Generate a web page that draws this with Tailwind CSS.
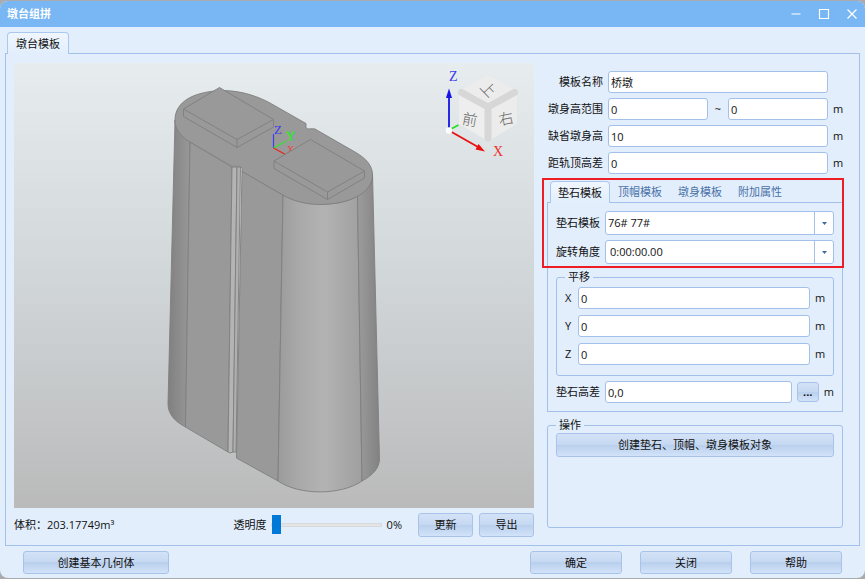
<!DOCTYPE html>
<html lang="zh-CN">
<head>
  <meta charset="UTF-8" />
  <meta name="viewport" content="width=device-width, initial-scale=1.0" />
  <title>墩台组拼</title>
  <script src="https://cdn.jsdelivr.net/npm/@tailwindcss/browser@4"></script>
</head>
<body class="bg-[#a9abae] h-screen py-px font-['Open_Sans','Noto_Sans_CJK_SC',sans-serif] text-[11px] leading-4 text-[#111]">
  <div class="h-full flex flex-col bg-[#e2eefc] rounded-lg overflow-hidden">

    <!-- title bar -->
    <header class="h-[26px] shrink-0 flex items-center bg-[#78b6f4] px-[7px] text-white">
      <h1 class="font-bold">墩台组拼</h1>
      <div class="ml-auto flex items-center gap-4">
        <button type="button" aria-label="最小化">
          <svg class="block size-3" viewBox="0 0 12 12" fill="none" stroke="#d6e9fd" stroke-width="1.4"><path d="M1.5 6h9" /></svg>
        </button>
        <button type="button" aria-label="最大化">
          <svg class="block size-3" viewBox="0 0 12 12" fill="none" stroke="#fff" stroke-width="1.2"><path d="M1.5 1.5h9v9h-9z" /></svg>
        </button>
        <button type="button" aria-label="关闭窗口">
          <svg class="block size-3" viewBox="0 0 12 12" fill="none" stroke="#fff" stroke-width="1.3"><path d="M1.5 1.5l9 9M10.5 1.5l-9 9" /></svg>
        </button>
      </div>
    </header>

    <main class="flex-1 min-h-0 flex flex-col px-[5px] pt-[5px]">
      <div class="flex px-0.5">
        <button type="button" class="relative z-10 h-[22px] px-2 -mb-px border border-b-0 border-[#a9c8f0] rounded-t-[4px] bg-linear-to-b from-[#f0f6fe] to-[#e2eefc]">墩台模板</button>
      </div>

      <div class="flex-1 min-h-0 flex gap-[13px] border border-[#a3c0ea] pl-2 pr-4 pt-[9px]">
        <!-- 3D view and its controls -->
        <section class="flex-1 min-w-0 flex flex-col">
          <div class="flex-1 min-h-0 bg-linear-to-b from-[#e7ecee] via-[#d0d5d8] to-[#bababa]">
            <svg class="block w-full h-full" viewBox="14 63 520 445" role="img" aria-label="桥墩三维模型">
              <defs>
                <linearGradient id="left-end"><stop offset="0" stop-color="#808080" /><stop offset="1" stop-color="#989898" /></linearGradient>
                <linearGradient id="round"><stop offset="0" stop-color="#9b9b9b" /><stop offset="0.25" stop-color="#a9a9a9" /><stop offset="0.55" stop-color="#b3b3b3" /><stop offset="1" stop-color="#9f9f9f" /></linearGradient>
                <linearGradient id="right-end"><stop offset="0" stop-color="#9c9c9c" /><stop offset="1" stop-color="#828282" /></linearGradient>
              </defs>

              <!-- shaft -->
              <g stroke="#7f7f7f" stroke-width="0.9" stroke-linejoin="round">
                <path fill="url(#left-end)" d="M175 120 L168 404 C168 415 176 422 185.500 427 L190 142 C180 136 175 129 175 120z" />
                <path fill="#999" d="M190 142 L185.500 427 L228 452 L232 167z" />
                <path fill="#b4b4b4" d="M232 167 L228 452 L230 453 L233 452 L237 167z" />
                <path fill="#b0b0b0" d="M237 167 L233 452 L236 452 L240.500 167z" />
                <path fill="#999" d="M242 171 L236.500 458 L278 481 L283 195z" />
                <path fill="url(#round)" d="M283 195 L278 481 C300 496 342 495 362 481 L357.500 196 C340 207 304 207 283 195z" />
                <path fill="url(#right-end)" d="M357.500 196 L362 481 C373 475 379.500 468 379.500 459 L372.500 174 C372.500 184 368 190 357.500 196z" />
              </g>

              <!-- top face -->
              <path fill="#999" stroke="#7f7f7f" stroke-width="0.9" d="M175 120 C175 101 195 91 224 90.500 C242 91 257 96 270 103 L306 123.500 L306 128 C308 130 312 128 315 129 L355 152 C367 159 372.500 166 372.500 175 C372.500 193 350 204 321 204.500 C306 204.500 293 201 283 195 L242 171.500 L242 168 C240 165 236 167 232 166.500 L190 142 C180 136 175 129 175 120z" />

              <g stroke-width="1.2">
                <path stroke="#3c3cf0" d="M273.500 148V134" />
                <path stroke="#2ee52e" d="M273.500 148L286.500 141" />
                <path stroke="#f02020" d="M273.500 148L285.500 154.500" />
              </g>
              <g class="font-['Liberation_Serif',serif]">
                <text x="274" y="134" font-size="13" fill="#3c3cf0">Z</text>
                <text x="286" y="140" font-size="13" fill="#2ee52e" stroke="#2ee52e" stroke-width="0.4">Y</text>
                <text x="287" y="153" font-size="10" fill="#f04040">X</text>
              </g>

              <!-- bearing pads -->
              <g fill="#999" stroke="#7f7f7f" stroke-width="0.9" stroke-linejoin="round">
                <path d="M183.500 109 L219.500 87.500 L273.500 119.500 V127 L237 147.500 L183.500 116.500z" />
                <path d="M183.500 109 L237 139.500 L273.500 119.500 M237 139.500V147.500" />
                <path d="M274 161 L310.500 139.500 L364.500 171 V178 L327.500 199.500 L274 168.500z" />
                <path d="M274 161 L327.500 192 L364.500 171 M327.500 192V199.500" />
              </g>

              <!-- view cube -->
              <path fill="#ececec" d="M461 90 L488 75 L515 90 L488 105z" />
              <path fill="#eee" d="M459 93 L486 108 V140 L459 124z" />
              <path fill="#ececec" d="M517 93 L490 108 V140 L517 124z" />
              <path fill="none" stroke="#d7d7d7" stroke-width="7" stroke-linecap="round" stroke-linejoin="round" d="M461.500 92.500 L488 107 L514.500 92.500 M488 107V138" />
              <g class="font-['Noto_Sans_CJK_SC',sans-serif]" font-size="15" font-weight="300" fill="#666" text-anchor="middle">
                <text transform="translate(484.500 93) rotate(46)">上</text>
                <text transform="translate(469 125) rotate(10)">前</text>
                <text transform="translate(507 124) rotate(-12)">右</text>
              </g>

              <!-- axes -->
              <path stroke="#22e022" stroke-width="1.8" d="M451 129L458.500 125" />
              <path stroke="#1414e6" stroke-width="1.8" d="M449 130V96" />
              <path fill="#1414e6" d="M449 88.500L452 98H446z" />
              <path stroke="#e81010" stroke-width="1.8" d="M449 130.500L478 147" />
              <path fill="#e81010" d="M485 151.500L475.500 149.500L478.500 144z" />
              <circle cx="449" cy="130.500" r="3.200" fill="#fff" />
              <g class="font-['Liberation_Serif',serif] text-[14px]">
                <text x="449" y="81" fill="#3c3cf0">Z</text>
                <text x="493" y="156" fill="#f03030">X</text>
              </g>
            </svg>
          </div>

          <div class="flex items-center pt-[5px] pb-2">
            <p>体积：203.17749m³</p>
            <label for="opacity" class="ml-auto">透明度</label>
            <input id="opacity" type="range" min="0" max="100" value="0" class="appearance-none w-[111px] h-5 ml-1 bg-transparent [&::-webkit-slider-runnable-track]:h-1 [&::-webkit-slider-runnable-track]:bg-[#e4e4e4] [&::-webkit-slider-runnable-track]:border [&::-webkit-slider-runnable-track]:border-[#d6dade] [&::-webkit-slider-thumb]:appearance-none [&::-webkit-slider-thumb]:w-[9px] [&::-webkit-slider-thumb]:h-[19px] [&::-webkit-slider-thumb]:-mt-[9px] [&::-webkit-slider-thumb]:bg-[#0078d7]" />
            <output for="opacity" class="ml-[5px] mr-4">0%</output>
            <button type="button" class="w-[55px] h-6 mr-1.5 border border-[#a8c2ea] rounded-[3px] bg-[linear-gradient(#d3e2f7,#c6d9f2_48%,#b9cfec_50%,#d2e3f9)]">更新</button>
            <button type="button" class="w-[55px] h-6 border border-[#a8c2ea] rounded-[3px] bg-[linear-gradient(#d3e2f7,#c6d9f2_48%,#b9cfec_50%,#d2e3f9)]">导出</button>
          </div>
        </section>

        <!-- template parameters -->
        <form class="w-[296px] shrink-0 flex flex-col pt-2">
          <div class="grid grid-cols-[56px_minmax(0,1fr)_10px] items-center gap-[5px]">
            <label for="name" class="text-right whitespace-nowrap">模板名称</label>
            <input id="name" type="text" value="桥墩" class="w-full h-[22px] px-0.5 bg-white border border-[#a3c0ea] rounded-[3px]" />
            <span></span>

            <label for="range-from" class="text-right whitespace-nowrap">墩身高范围</label>
            <div class="flex items-center">
              <input id="range-from" type="text" value="0" class="flex-1 min-w-0 h-[22px] px-0.5 bg-white border border-[#a3c0ea] rounded-[3px]" />
              <label for="range-to" class="w-5 text-center">~</label>
              <input id="range-to" type="text" value="0" class="flex-1 min-w-0 h-[22px] px-0.5 bg-white border border-[#a3c0ea] rounded-[3px]" />
            </div>
            <span>m</span>

            <label for="height" class="text-right whitespace-nowrap">缺省墩身高</label>
            <input id="height" type="text" value="10" class="w-full h-[22px] px-0.5 bg-white border border-[#a3c0ea] rounded-[3px]" />
            <span>m</span>

            <label for="rail" class="text-right whitespace-nowrap">距轨顶高差</label>
            <input id="rail" type="text" value="0" class="w-full h-[22px] px-0.5 bg-white border border-[#a3c0ea] rounded-[3px]" />
            <span>m</span>
          </div>

          <section class="relative mt-[7px]">
            <div class="flex pl-[3px] text-[#4a72a8]">
              <button type="button" class="relative z-10 h-[22px] px-[7px] -mb-px border border-b-0 border-[#a9c8f0] rounded-t-[4px] bg-linear-to-b from-[#f0f6fe] to-[#e2eefc] text-[#111]">垫石模板</button>
              <button type="button" class="px-2">顶帽模板</button>
              <button type="button" class="px-2">墩身模板</button>
              <button type="button" class="px-2">附加属性</button>
            </div>

            <div class="flex flex-col gap-[5px] border border-[#a3c0ea] p-2">
              <div class="flex items-center gap-[5px]">
                <label for="pad" class="shrink-0">垫石模板</label>
                <div class="relative flex-1">
                  <select id="pad" class="appearance-none block w-full h-6 pl-0.5 bg-white border border-[#a3c0ea] rounded-[3px]">
                    <option>76# 77#</option>
                  </select>
                  <span class="absolute inset-y-0 right-0 w-5 grid place-items-center border-l border-[#a3c0ea] pointer-events-none">
                    <svg class="w-[5px] h-[3px]" viewBox="0 0 5 3" fill="#41699f"><path d="M0 0h5L2.500 3z" /></svg>
                  </span>
                </div>
              </div>
              <div class="flex items-center gap-[5px]">
                <label for="angle" class="shrink-0">旋转角度</label>
                <div class="relative flex-1">
                  <select id="angle" class="appearance-none block w-full h-6 pl-1 bg-white border border-[#a3c0ea] rounded-[3px]">
                    <option>0:00:00.00</option>
                  </select>
                  <span class="absolute inset-y-0 right-0 w-5 grid place-items-center border-l border-[#a3c0ea] pointer-events-none">
                    <svg class="w-[5px] h-[3px]" viewBox="0 0 5 3" fill="#41699f"><path d="M0 0h5L2.500 3z" /></svg>
                  </span>
                </div>
              </div>

              <fieldset class="border border-[#a3c0ea] rounded-[3px] pl-2 pr-1 pt-0.5 pb-2.5">
                <legend class="px-[3px]">平移</legend>
                <div class="grid grid-cols-[8px_minmax(0,1fr)_14px] items-center gap-x-[5px] gap-y-1.5">
                  <label for="dx">X</label>
                  <input id="dx" type="text" value="0" class="w-full h-[22px] px-0.5 bg-white border border-[#a3c0ea] rounded-[3px]" />
                  <span>m</span>
                  <label for="dy">Y</label>
                  <input id="dy" type="text" value="0" class="w-full h-[22px] px-0.5 bg-white border border-[#a3c0ea] rounded-[3px]" />
                  <span>m</span>
                  <label for="dz">Z</label>
                  <input id="dz" type="text" value="0" class="w-full h-[22px] px-0.5 bg-white border border-[#a3c0ea] rounded-[3px]" />
                  <span>m</span>
                </div>
              </fieldset>

              <div class="flex items-center gap-[5px]">
                <label for="diff" class="shrink-0">垫石高差</label>
                <input id="diff" type="text" value="0,0" class="flex-1 min-w-0 h-[22px] px-0.5 bg-white border border-[#a3c0ea] rounded-[3px]" />
                <button type="button" class="w-[22px] h-5 font-bold leading-3 border border-[#a8c2ea] rounded-[3px] bg-[linear-gradient(#d3e2f7,#c6d9f2_48%,#b9cfec_50%,#d2e3f9)]">...</button>
                <span>m</span>
              </div>
            </div>

            <!-- highlight round the tabs and the two lists -->
            <div class="absolute -left-[5px] -right-px -top-[3px] h-[90px] border-2 border-[#ee1c25] pointer-events-none"></div>
          </section>

          <fieldset class="flex-1 mt-[5px] mb-[17px] border border-[#a3c0ea] rounded-[3px] px-2">
            <legend class="px-[3px]">操作</legend>
            <button type="button" class="block w-full h-6 border border-[#a8c2ea] rounded-[3px] bg-[linear-gradient(#d3e2f7,#c6d9f2_48%,#b9cfec_50%,#d2e3f9)]">创建垫石、顶帽、墩身模板对象</button>
          </fieldset>
        </form>
      </div>
    </main>

    <footer class="flex gap-[18px] px-[23px] pt-[5px] pb-1">
      <button type="button" class="w-[146px] h-[23px] mr-auto border border-[#a8c2ea] rounded-[3px] bg-[linear-gradient(#d3e2f7,#c6d9f2_48%,#b9cfec_50%,#d2e3f9)]">创建基本几何体</button>
      <button type="button" class="w-[92px] h-[23px] border border-[#a8c2ea] rounded-[3px] bg-[linear-gradient(#d3e2f7,#c6d9f2_48%,#b9cfec_50%,#d2e3f9)]">确定</button>
      <button type="button" class="w-[92px] h-[23px] border border-[#a8c2ea] rounded-[3px] bg-[linear-gradient(#d3e2f7,#c6d9f2_48%,#b9cfec_50%,#d2e3f9)]">关闭</button>
      <button type="button" class="w-[92px] h-[23px] border border-[#a8c2ea] rounded-[3px] bg-[linear-gradient(#d3e2f7,#c6d9f2_48%,#b9cfec_50%,#d2e3f9)]">帮助</button>
    </footer>
  </div>
</body>
</html>
